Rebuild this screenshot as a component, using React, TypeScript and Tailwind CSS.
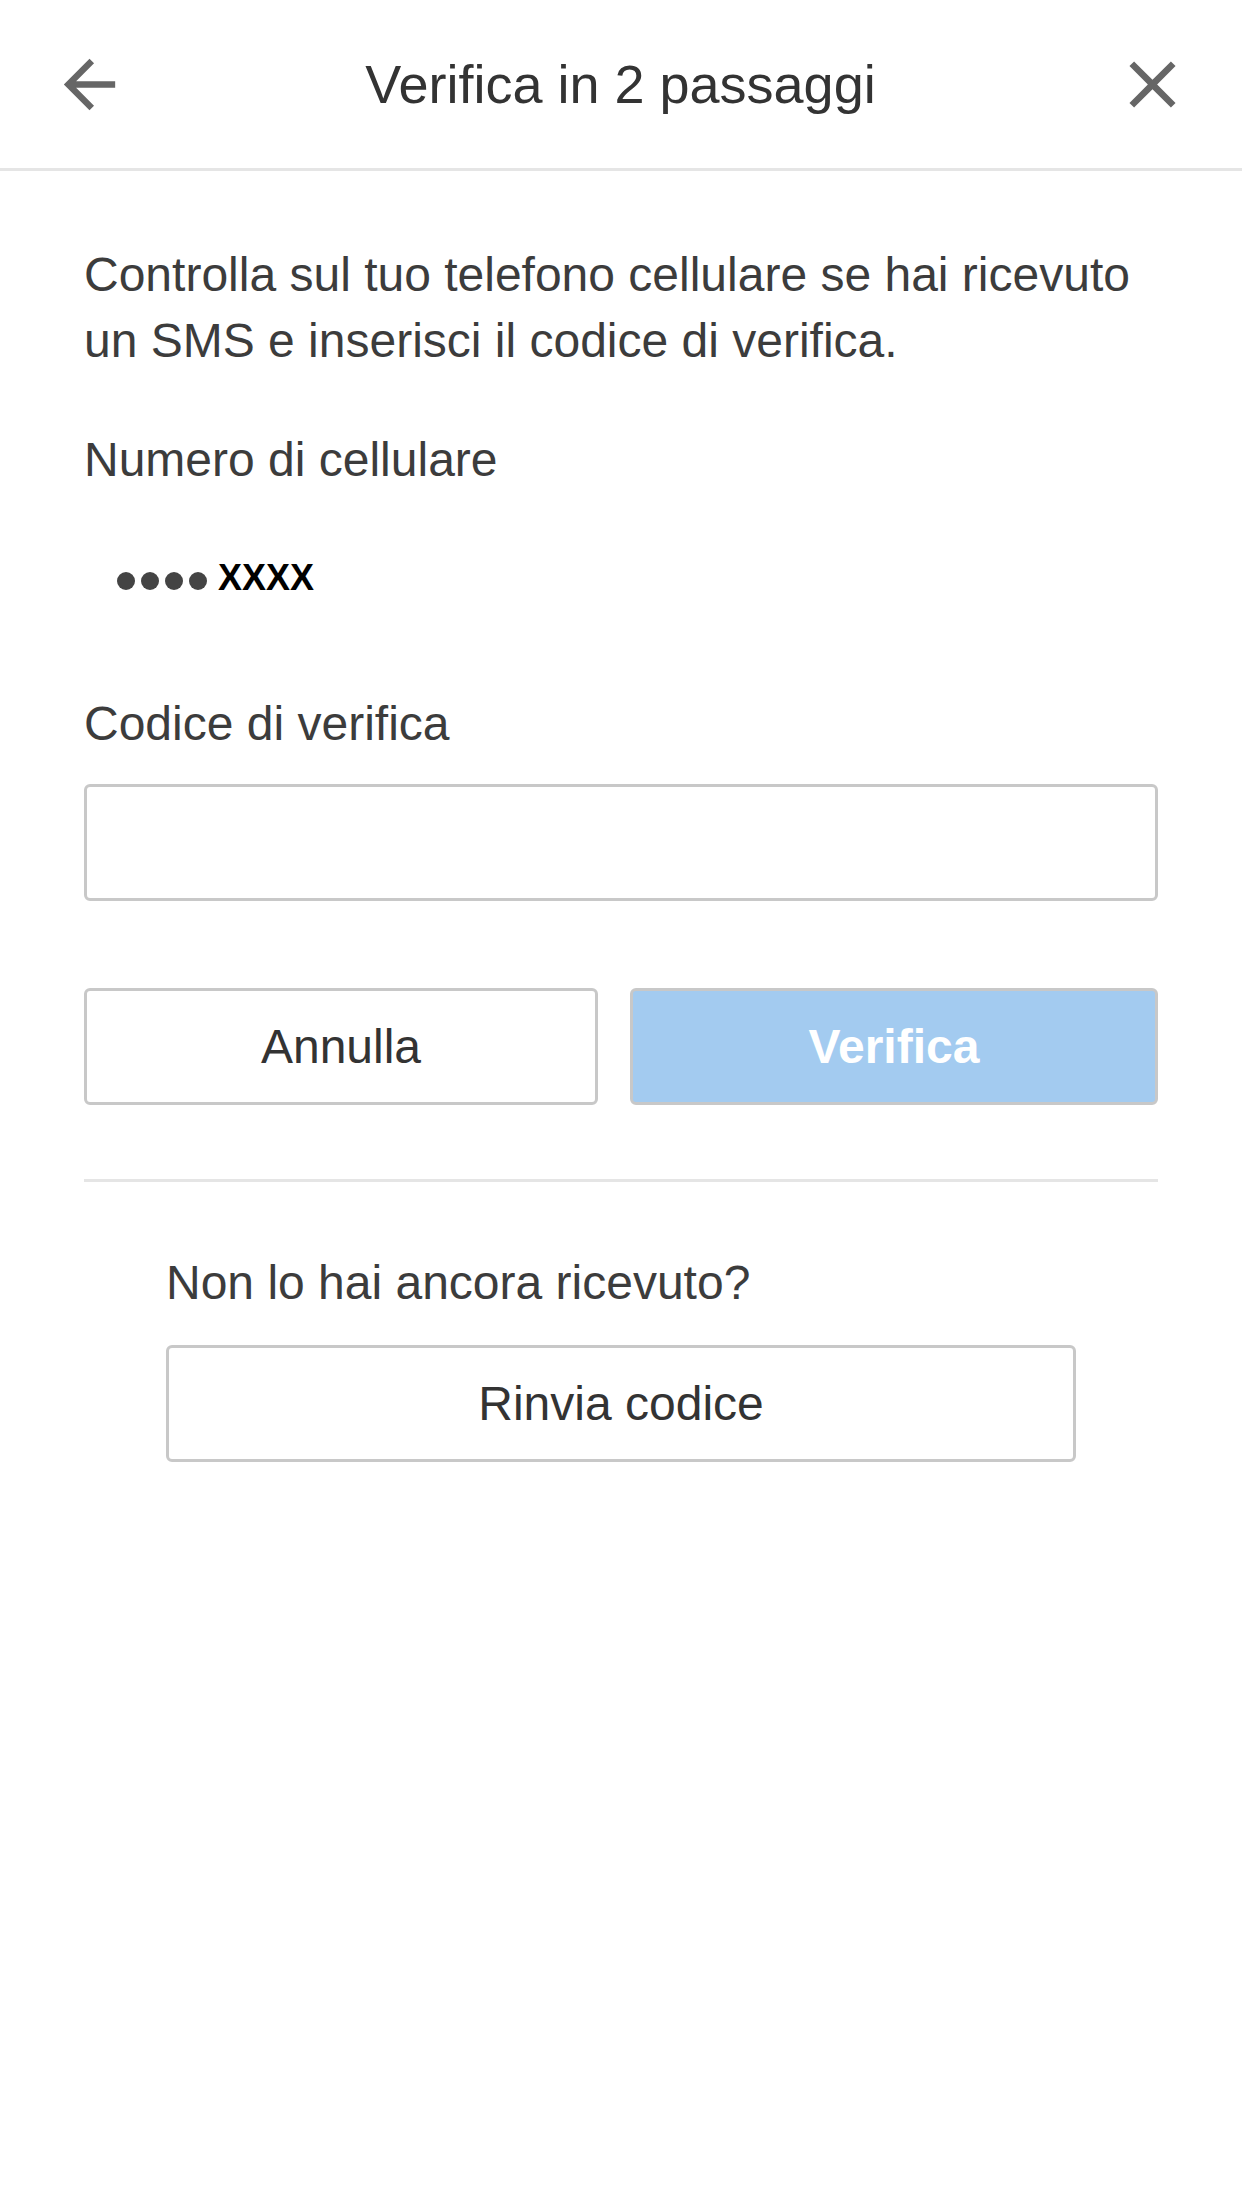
import React from 'react';

function BackIcon() {
  return (
    <svg viewBox="0 0 24 24" className="w-[77px] h-[77px]" fill="#666666">
      <path d="M20 11H7.83l5.59-5.59L12 4l-8 8 8 8 1.41-1.41L7.83 13H20v-2z" />
    </svg>
  );
}

function CloseIcon() {
  return (
    <svg viewBox="0 0 24 24" className="w-[79px] h-[79px]" fill="#666666">
      <path d="M19 6.41L17.59 5 12 10.59 6.41 5 5 6.41 10.59 12 5 17.59 6.41 19 12 13.41 17.59 19 19 17.59 13.41 12z" />
    </svg>
  );
}

export default function App() {
  return (
    <div className="w-[1242px] min-h-[2208px] bg-white text-[#3c3c3c] font-['Liberation_Sans',Arial,sans-serif]">
      {/* header */}
      <div className="h-[171px] flex items-center pl-[51px] pr-[50px] border-b-[3px] border-[#e5e5e5]">
        <BackIcon />
        <h1 className="flex-1 text-center text-[54px] leading-[66px] text-[#333333]">Verifica in 2 passaggi</h1>
        <CloseIcon />
      </div>

      <div className="px-[84px]">
        <p className="mt-[71px] text-[48px] leading-[66px]">
          Controlla sul tuo telefono cellulare se hai ricevuto un SMS e inserisci il codice di verifica.
        </p>

        <div className="mt-[53px] text-[48px] leading-[66px]">Numero di cellulare</div>

        <div className="mt-[52px] h-[66px] flex items-center">
          <div className="ml-[33px] mt-[6px] flex gap-[6px]">
            <span className="w-[18px] h-[18px] rounded-full bg-[#444444]" />
            <span className="w-[18px] h-[18px] rounded-full bg-[#444444]" />
            <span className="w-[18px] h-[18px] rounded-full bg-[#444444]" />
            <span className="w-[18px] h-[18px] rounded-full bg-[#444444]" />
          </div>
          <span className="ml-[11px] text-[36px] font-bold text-black leading-[66px]">XXXX</span>
        </div>

        <div className="mt-[80px] text-[48px] leading-[66px]">Codice di verifica</div>
        <input
          type="text"
          className="mt-[27px] block w-full h-[117px] border-[3px] border-[#c8c8c8] rounded-[6px] bg-white px-[24px] text-[48px] outline-none"
        />

        <div className="mt-[87px] flex gap-[32px]">
          <button className="w-[514px] h-[117px] border-[3px] border-[#c8c8c8] rounded-[6px] bg-white text-[48px] text-[#333333]">
            Annulla
          </button>
          <button className="flex-1 h-[117px] border-[3px] border-[#c8c8c8] rounded-[6px] bg-[#a3cbf0] text-[48px] font-bold text-white">
            Verifica
          </button>
        </div>

        <div className="mt-[74px] h-[3px] bg-[#e5e5e5]" />

        <div className="px-[82px]">
          <div className="mt-[68px] text-[48px] leading-[66px]">Non lo hai ancora ricevuto?</div>
          <button className="mt-[29px] w-full h-[117px] border-[3px] border-[#c8c8c8] rounded-[6px] bg-white text-[48px] text-[#333333]">
            Rinvia codice
          </button>
        </div>
      </div>
    </div>
  );
}
